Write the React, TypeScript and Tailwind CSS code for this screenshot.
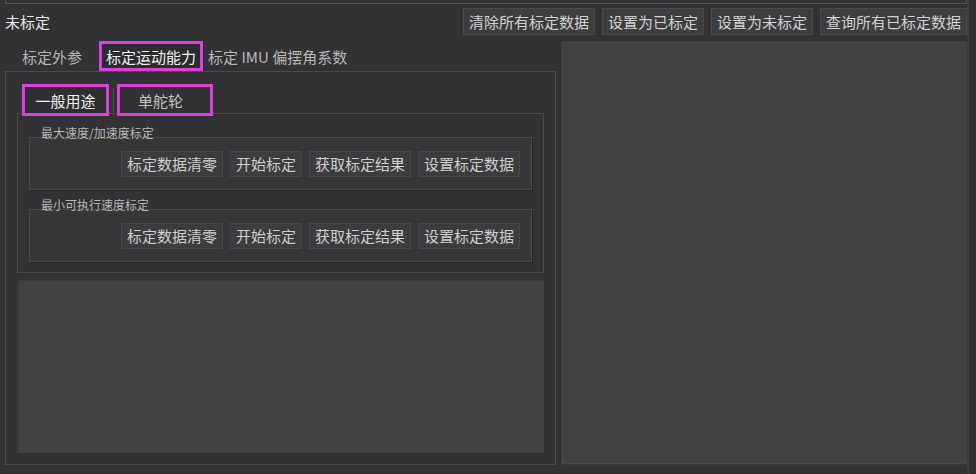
import React from 'react';

const font = { fontFamily: '"Noto Sans CJK SC", "Noto Sans", sans-serif' };

const Btn: React.FC<{ label: string }> = ({ label }) => (
  <div className="h-[27px] px-[5px] flex items-center border border-[#4a494b] bg-[#3d3c3e] text-[15px] leading-[15px] text-[#d2d2d2] whitespace-nowrap">
    {label}
  </div>
);

const SmallBtn: React.FC<{ label: string }> = ({ label }) => (
  <div className="h-[26px] px-[5px] flex items-center border border-[#48474a] bg-[#3c3b3d] text-[15px] leading-[15px] text-[#cfcfcf] whitespace-nowrap">
    {label}
  </div>
);

const GroupBox: React.FC<{ title: string }> = ({ title }) => (
  <div>
    <div className="h-[14px] pl-[12px] -mb-[3px] text-[12px] leading-[14px] text-[#b9b9b9] relative z-10">{title}</div>
    <div className="h-[53px] border border-[#4a494b] bg-[#363537] shadow-[1px_1px_0_#262527] flex items-center justify-end gap-[7px] pr-[11px]">
      <SmallBtn label="标定数据清零" />
      <SmallBtn label="开始标定" />
      <SmallBtn label="获取标定结果" />
      <SmallBtn label="设置标定数据" />
    </div>
  </div>
);

export default function App() {
  return (
    <div style={font} className="w-[976px] h-[474px] bg-[#323133] flex overflow-hidden select-none">
      <div className="w-[967px] flex flex-col">
        {/* remains of the box above */}
        <div className="h-[4px] ml-[5px] border-b border-x border-[#555456]" />

        {/* header */}
        <div className="h-[37px] pl-[5px] pt-[4px] flex items-start justify-between">
          <div className="h-[27px] flex items-center text-[15px] leading-[15px] text-[#e8e8e8]">未标定</div>
          <div className="flex gap-[7px]">
            <Btn label="清除所有标定数据" />
            <Btn label="设置为已标定" />
            <Btn label="设置为未标定" />
            <Btn label="查询所有已标定数据" />
          </div>
        </div>

        {/* body */}
        <div className="flex gap-[5px] pl-[5px] h-[424px]">
          {/* left: tab widget */}
          <div className="w-[551px] flex flex-col">
            <div className="h-[30px] flex items-center pl-[17px]">
              <span className="text-[15px] leading-[15px] text-[#b8b8b8]">标定外参</span>
              <div className="ml-[17px] h-[30px] px-[4px] flex items-center border-[3px] border-[#dc3fdc] bg-[#2c2b2d] text-[15px] leading-[15px] text-[#f2f2f2]">
                标定运动能力
              </div>
              <span className="ml-[5px] text-[15px] leading-[15px] text-[#b8b8b8]">标定 IMU 偏摆角系数</span>
            </div>

            <div className="flex-1 border border-[#4a494b] px-[11px] pt-[12px] pb-[11px] flex flex-col">
              {/* inner tabs */}
              <div className="h-[32px] -mb-[3px] flex items-stretch pl-[5px] relative z-10">
                <div className="w-[87px] flex items-center justify-center border-[3px] border-[#dc3fdc] bg-[#2f2e30] text-[15px] leading-[15px] text-[#f0f0f0]">
                  一般用途
                </div>
                <div className="w-[1px] ml-[4px] mt-[4px] bg-[#4a494b]" />
                <div className="ml-[3px] w-[96px] pl-[18px] flex items-center border-[3px] border-[#dc3fdc] bg-[#323133] text-[15px] leading-[15px] text-[#c4c4c4]">
                  单舵轮
                </div>
              </div>

              <div className="h-[160px] border border-[#4a494b] px-[11px] pt-[12px] flex flex-col gap-[8px]">
                <GroupBox title="最大速度/加速度标定" />
                <GroupBox title="最小可执行速度标定" />
              </div>

              <div className="mt-[7px] h-[173px] bg-[#424143] border-t border-[#3a393b] shadow-[inset_2px_0_0_#3b3a3c]" />
            </div>
          </div>

          {/* right panel */}
          <div className="flex-1 bg-[#414042] border border-[#38373a] shadow-[inset_0_0_0_1px_#4a494b]" />
        </div>
      </div>
      <div className="flex-1 border-l-2 border-[#3d3c3e] bg-[#2f2e30]" />
    </div>
  );
}
